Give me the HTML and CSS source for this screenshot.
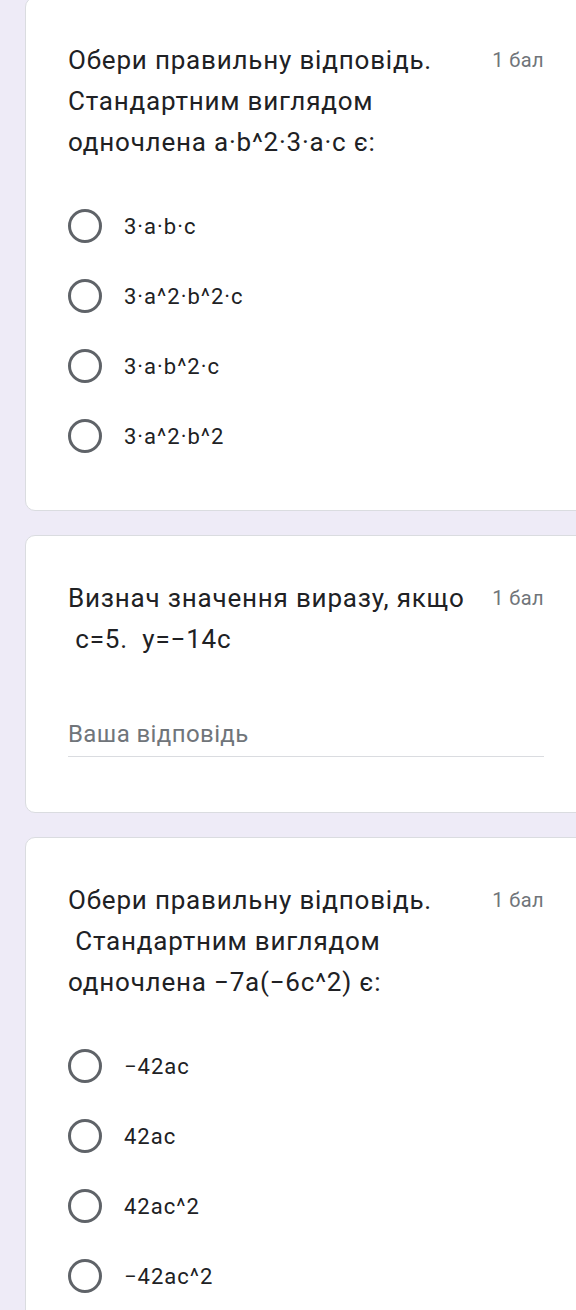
FILE: index.html
```html
<!DOCTYPE html>
<html lang="uk">
<head>
    <meta charset="UTF-8">
    <meta name="viewport" content="width=device-width, initial-scale=1.0">
    <title>Тест</title>
    <link rel="stylesheet" href="styles.css">
</head>
<body>
    <main class="form">
        <section class="question">
            <div class="question-header">
                <h2 class="question-title">Обери правильну відповідь.<br>Стандартним виглядом<br>одночлена a·b^2·3·a·c є:</h2>
                <span class="points">1 бал</span>
            </div>
            <div class="options">
                <label class="option"><input type="radio" name="q1"><span class="radio"></span><span class="option-text">3·a·b·c</span></label>
                <label class="option"><input type="radio" name="q1"><span class="radio"></span><span class="option-text">3·a^2·b^2·c</span></label>
                <label class="option"><input type="radio" name="q1"><span class="radio"></span><span class="option-text">3·a·b^2·c</span></label>
                <label class="option"><input type="radio" name="q1"><span class="radio"></span><span class="option-text">3·a^2·b^2</span></label>
            </div>
        </section>

        <section class="question">
            <div class="question-header">
                <h2 class="question-title">Визнач значення виразу, якщо<br>&nbsp;c=5.&nbsp; y=−14c</h2>
                <span class="points">1 бал</span>
            </div>
            <div class="answer">
                <input type="text" placeholder="Ваша відповідь">
            </div>
        </section>

        <section class="question">
            <div class="question-header">
                <h2 class="question-title">Обери правильну відповідь.<br>&nbsp;Стандартним виглядом<br>одночлена −7a(−6c^2) є:</h2>
                <span class="points">1 бал</span>
            </div>
            <div class="options">
                <label class="option"><input type="radio" name="q3"><span class="radio"></span><span class="option-text">−42ac</span></label>
                <label class="option"><input type="radio" name="q3"><span class="radio"></span><span class="option-text">42ac</span></label>
                <label class="option"><input type="radio" name="q3"><span class="radio"></span><span class="option-text">42ac^2</span></label>
                <label class="option"><input type="radio" name="q3"><span class="radio"></span><span class="option-text">−42ac^2</span></label>
            </div>
        </section>
    </main>
</body>
</html>
```

FILE: styles.css
```css
:root {
    --bg: #eeebf7;
    --border: #dadce0;
    --text: #202124;
    --muted: #70757a;
    --radio: #5f6368;
}

* {
    box-sizing: border-box;
    margin: 0;
    padding: 0;
    font-family: Roboto, 'Noto Sans', Arial, sans-serif;
}

body {
    background-color: var(--bg);
    color: var(--text);
    overflow: hidden;
}

.form {
    display: flex;
    flex-direction: column;
    gap: 24px;
    margin-top: -3px;
    margin-left: 25px;
    width: 562px;
}

.question {
    background: white;
    border: 1px solid var(--border);
    border-radius: 10px;
    padding: 42px 42px 39px;
}

.question-header {
    display: flex;
    align-items: flex-start;
    gap: 14px;
}

.question-title {
    flex: 1;
    font-size: 26px;
    font-weight: 400;
    line-height: 41px;
    letter-spacing: 0.8px;
    color: var(--text);
    white-space: nowrap;
}

.points {
    font-size: 20px;
    line-height: 41px;
    letter-spacing: 0.4px;
    color: var(--muted);
    white-space: nowrap;
}

.options {
    display: flex;
    flex-direction: column;
    margin-top: 28px;
}

.option {
    display: flex;
    align-items: center;
    gap: 22px;
    height: 70px;
    cursor: pointer;
}

.option input {
    display: none;
}

.radio {
    width: 34px;
    height: 34px;
    border: 3px solid var(--radio);
    border-radius: 50%;
    flex-shrink: 0;
}

.option-text {
    font-size: 22px;
    letter-spacing: 1px;
    color: var(--text);
}

.answer {
    margin-top: 60px;
    margin-bottom: 16px;
}

.answer input {
    width: 100%;
    border: none;
    border-bottom: 1px solid var(--border);
    padding: 0 0 8px;
    font-size: 24px;
    letter-spacing: 0.4px;
    color: var(--text);
    outline: none;
    background: transparent;
}

.answer input::placeholder {
    color: var(--muted);
}
```
